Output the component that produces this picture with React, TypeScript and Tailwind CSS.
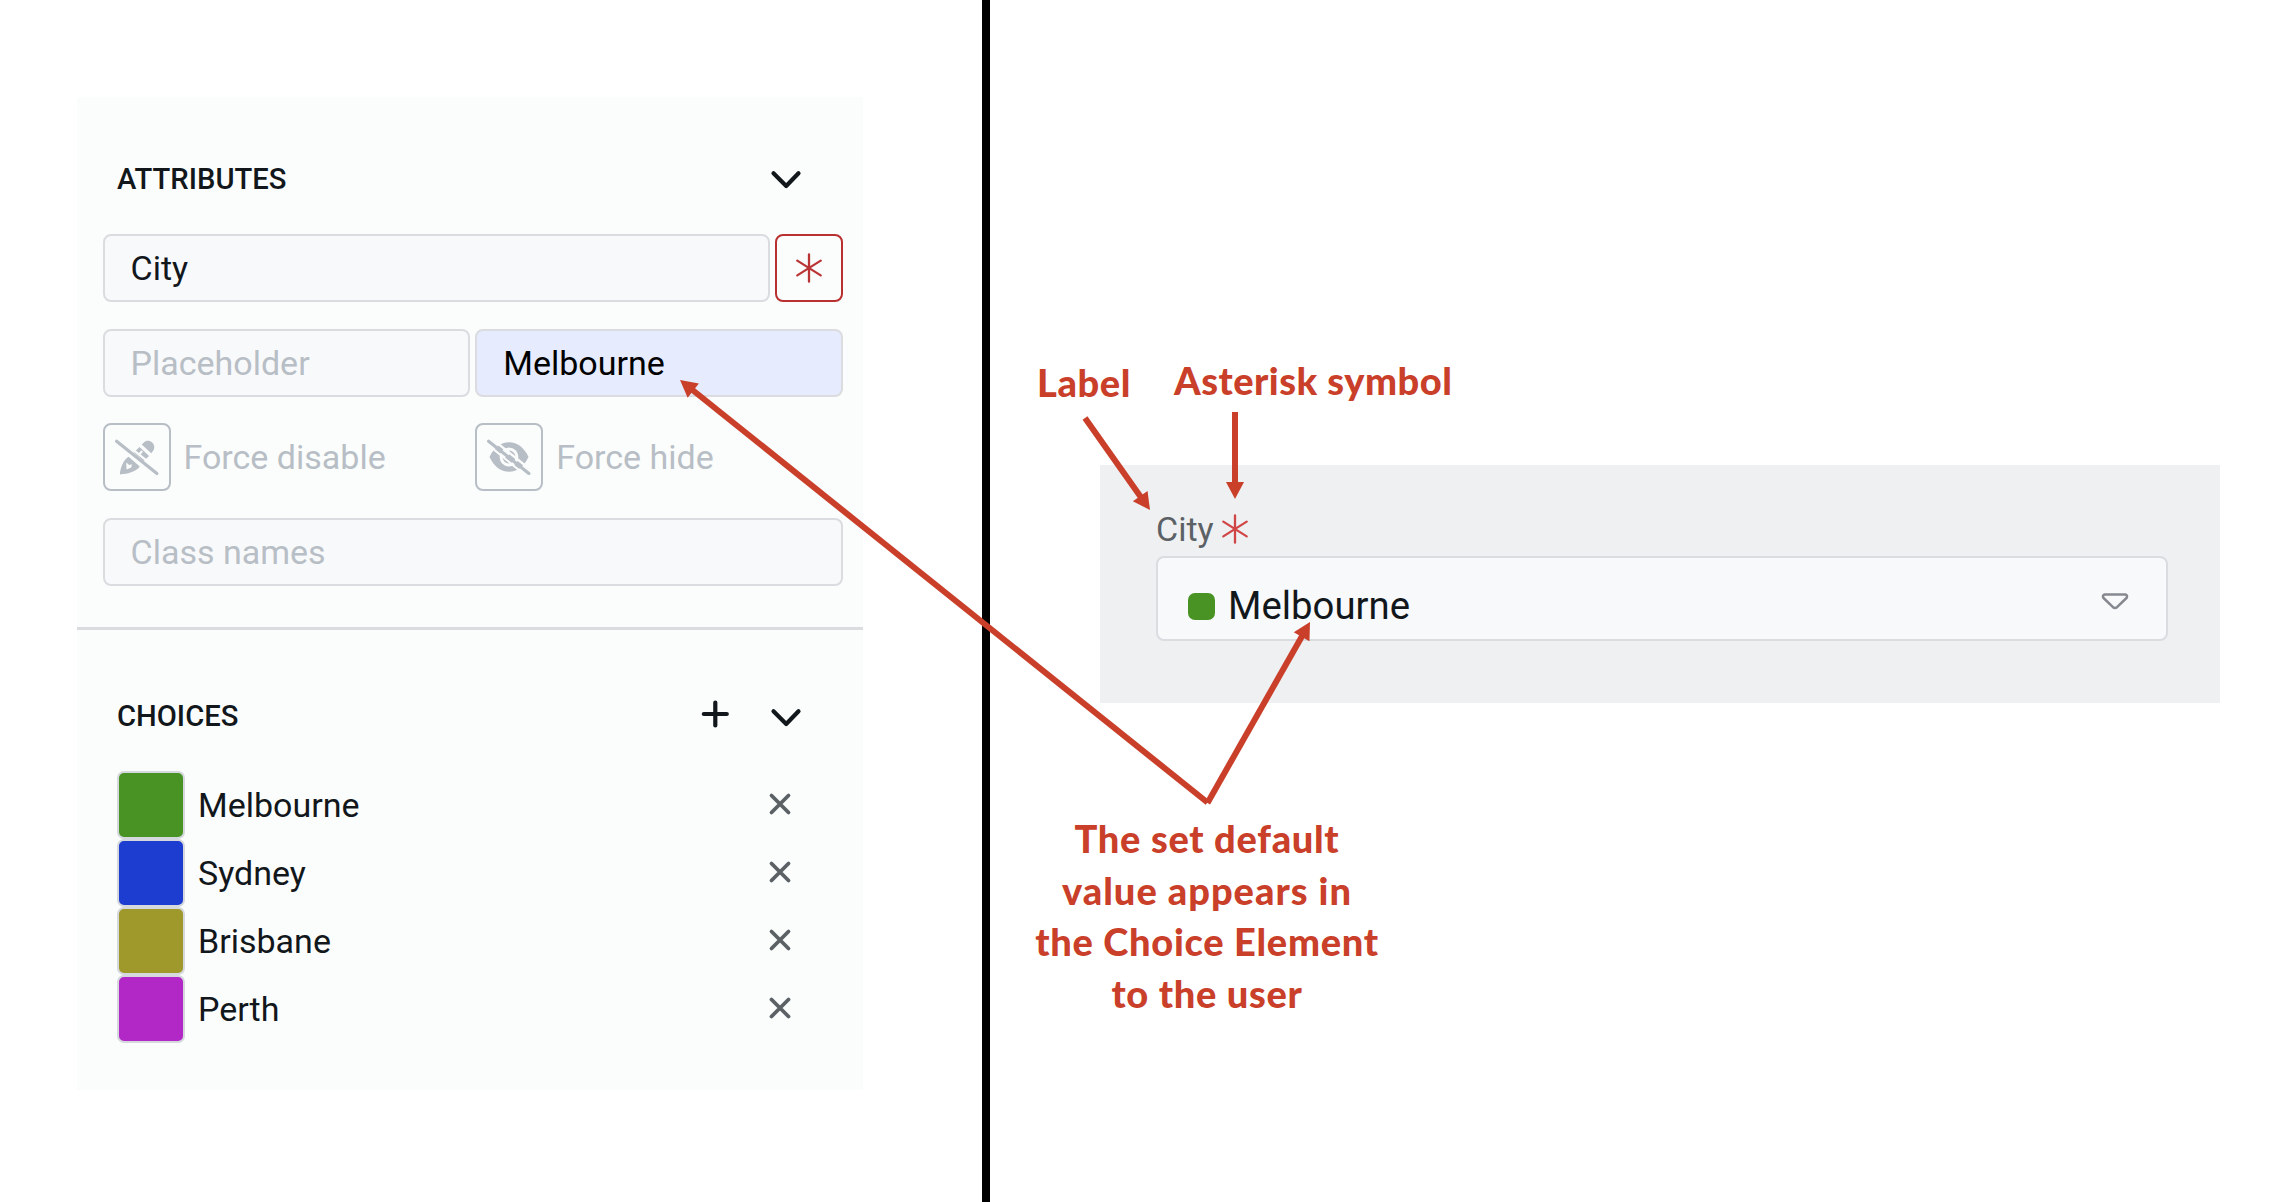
import React from "react";

const RED = "#c93f2a";

function Chevron() {
  return (
    <svg className="h-[20px] w-[32px]" viewBox="0 0 32 20" fill="none" stroke="#12171b" strokeWidth="4.2" strokeLinecap="round" strokeLinejoin="round">
      <path d="M3.5 3.3 16.2 16 28.5 3.3" />
    </svg>
  );
}

function Asterisk({ color }: { color: string }) {
  return (
    <svg className="h-[30px] w-[28px] shrink-0" viewBox="0 0 28 30" fill="none" stroke={color} strokeWidth="2.3" strokeLinecap="round">
      <path d="M14 1.3V28.7M2.3 7.6 25.7 22.4M25.7 7.6 2.3 22.4" />
    </svg>
  );
}

function PenOff() {
  return (
    <svg className="h-[40px] w-[46px]" viewBox="0 0 46 40">
      <g fill="#b8bec5">
        <path d="M30.2 5.2c2.2-2.2 5.6-2 8 .4s2.8 6 .8 8.400l-1.800 2.200-9.500-8.700z" />
        <path d="M25.500 10l9.600 8.900-5.400 5.200-9.900-8.600z" />
        <path d="M14.600 19.800 25.800 29.500C21.600 35.200 13.500 36.800 5.900 37.400 6.100 31 9.600 22.500 14.600 19.800Z" />
      </g>
      <path d="M12.300 25.500 15.300 28 18 27.300 17.200 30.500 12.500 32.500z" fill="#fbfdfc" />
      <path d="M25.200 17.500 28.200 14" stroke="#fbfdfc" strokeWidth="2" />
      <path d="M4.600 1.200 44.900 33.400" stroke="#fbfdfc" strokeWidth="2.200" />
      <path d="M2.600 4.200 42.900 36.400" stroke="#b8bec5" strokeWidth="3.200" strokeLinecap="round" />
    </svg>
  );
}

function EyeOff() {
  return (
    <svg className="h-[40px] w-[46px]" viewBox="0 0 46 40">
      <path d="M3.500 20C8 10.500 14.500 5.300 23 5.300S38 10.500 42.500 20C38 29.500 31.500 34.700 23 34.700S8 29.500 3.500 20Z" fill="#b8bec5" />
      <circle cx="23" cy="20" r="9.400" fill="#fbfdfc" />
      <path d="M23.500 13.500a6.500 6.500 0 1 1-7 6.500a5 5 0 0 0 6.700-6.500z" fill="#b8bec5" />
      <path d="M4.600 .8 44.900 33" stroke="#fbfdfc" strokeWidth="2.400" />
      <path d="M.6 6.600 38.900 38" stroke="#fbfdfc" strokeWidth="2" />
      <path d="M2.600 4.200 42.900 36.400" stroke="#b8bec5" strokeWidth="3.200" strokeLinecap="round" />
    </svg>
  );
}

function Field({ children, className }: { children: React.ReactNode; className: string }) {
  return <div className={"flex h-[68px] items-center rounded-[8px] border-2 border-[#dadce0] pt-[1px] pl-[26px] " + className}>{children}</div>;
}

const choices = [
  { name: "Melbourne", swatch: "bg-[#489323]" },
  { name: "Sydney", swatch: "bg-[#1c3dd0]" },
  { name: "Brisbane", swatch: "bg-[#9e992a]" },
  { name: "Perth", swatch: "bg-[#b228c6]" },
];

function Arrow({ x1, y1, x2, y2 }: { x1: number; y1: number; x2: number; y2: number }) {
  const len = Math.hypot(x2 - x1, y2 - y1);
  const ux = (x2 - x1) / len;
  const uy = (y2 - y1) / len;
  const bx = x2 - ux * 17;
  const by = y2 - uy * 17;
  return (
    <g>
      <line x1={x1} y1={y1} x2={bx + ux} y2={by + uy} stroke={RED} strokeWidth="6" />
      <polygon points={`${x2},${y2} ${bx - uy * 9},${by + ux * 9} ${bx + uy * 9},${by - ux * 9}`} fill={RED} />
    </g>
  );
}

const note = "absolute whitespace-nowrap font-['Lato',sans-serif] text-[38px] leading-[51.500px] font-black text-[#c93f2a]";

export default function App() {
  return (
    <div className="relative flex h-[1202px] w-[2274px] overflow-hidden bg-white font-['Roboto',sans-serif] text-[34px] text-[#12171b]">
      <div className="w-[982px] shrink-0 pt-[97px] pl-[77px]">
        <div className="h-[993px] w-[786px] bg-[#fbfdfc]">
          <section className="h-[533px] border-b-3 border-[#dadce0] pr-[20px] pl-[25.500px]">
            <div className="flex h-[137px] items-center justify-between pt-[28px] pr-[41px] pl-[14.500px]">
              <h2 className="text-[29.200px] font-medium">ATTRIBUTES</h2>
              <Chevron />
            </div>
            <div className="flex flex-col gap-[26.600px]">
              <div className="flex gap-[5px]">
                <Field className="flex-1 bg-[#f8f9fb]">City</Field>
                <div className="flex h-[68px] w-[68px] items-center justify-center rounded-[8px] border-2 border-[#b93030]">
                  <Asterisk color="#b93535" />
                </div>
              </div>
              <div className="flex gap-[5px]">
                <Field className="flex-1 bg-[#f8f9fb] text-[#b8bec5]">Placeholder</Field>
                <Field className="flex-1 bg-[#e6ecfd] text-black">Melbourne</Field>
              </div>
              <div className="flex gap-[5px] text-[#b8bec5]">
                <div className="flex flex-1 items-center gap-[13px]">
                  <div className="flex h-[68px] w-[68px] items-center justify-center rounded-[8px] border-2 border-[#b8bec5]"><PenOff /></div>
                  <span>Force disable</span>
                </div>
                <div className="flex flex-1 items-center gap-[13px]">
                  <div className="flex h-[68px] w-[68px] items-center justify-center rounded-[8px] border-2 border-[#b8bec5]"><EyeOff /></div>
                  <span>Force hide</span>
                </div>
              </div>
              <Field className="bg-[#f8f9fb] text-[#b8bec5]">Class names</Field>
            </div>
          </section>
          <section className="pl-[40px]">
            <div className="flex h-[141px] items-center pt-[30px]">
              <h2 className="w-[583px] pt-[2px] text-[29.200px] font-medium">CHOICES</h2>
              <svg className="mr-[39px] -mt-[4px] h-[30px] w-[30px]" viewBox="0 0 30 30" stroke="#12171b" strokeWidth="4.200" strokeLinecap="round">
                <path d="M15.300 3.500V26.500M3.800 15H26.800" />
              </svg>
              <div className="mt-[4px] ml-[1px]"><Chevron /></div>
            </div>
            <ul>
              {choices.map((c) => (
                <li key={c.name} className="flex h-[68px] items-center">
                  <span className={"h-[67.500px] w-[68px] shrink-0 rounded-[7px] border-[2.500px] border-[#d5d8dd] " + c.swatch} />
                  <span className="flex-1 pl-[13px]">{c.name}</span>
                  <svg className="mr-[71px] -mt-[2px] h-[24px] w-[24px]" viewBox="0 0 24 24" stroke="#5c6166" strokeWidth="3.800" strokeLinecap="round">
                    <path d="M3.500 3.500 20.500 20.500M20.500 3.500 3.500 20.500" />
                  </svg>
                </li>
              ))}
            </ul>
          </section>
        </div>
      </div>
      <div className="w-[8px] shrink-0 bg-black" />
      <div className="flex-1 pt-[465px] pl-[110px]">
        <div className="h-[238px] w-[1120px] bg-[#eff0f2] px-[56px] pt-[40px]">
          <div className="flex h-[51px] items-center gap-[7px] pb-[3px] text-[#5c6166]">
            <span>City</span>
            <Asterisk color="#d04545" />
          </div>
          <div className="flex h-[85px] w-[1012px] items-center rounded-[8px] border-2 border-[#dadce0] bg-[#f8f9fb] pr-[37px] pl-[30px] text-[38.300px]">
            <span className="mt-[16px] h-[27px] w-[27px] rounded-[7px] bg-[#489323]" />
            <span className="mt-[14px] flex-1 pl-[13px]">Melbourne</span>
            <svg className="mt-[6px] h-[20px] w-[28px]" viewBox="0 0 28 20" fill="none" stroke="#85898f" strokeWidth="2.500" strokeLinejoin="round">
              <path d="M3.500 2.500H24.500Q27 3.500 25.500 6L16 15.200Q14 16.800 12 15.200L2.500 6Q1 3.500 3.500 2.500Z" />
            </svg>
          </div>
        </div>
      </div>

      <svg className="absolute inset-0 h-full w-full" viewBox="0 0 2274 1202">
        <Arrow x1={1085} y1={418} x2={1150} y2={510} />
        <Arrow x1={1235} y1={412} x2={1235} y2={499} />
        <Arrow x1={1207.500} y1={802.500} x2={680} y2={380} />
        <Arrow x1={1207.500} y1={803} x2={1310} y2={622} />
      </svg>
      <div className={note + " top-[357px] left-[1037px] tracking-[0.600px]"}>Label</div>
      <div className={note + " top-[355px] left-[1174px] tracking-[0.500px]"}>Asterisk symbol</div>
      <div className={note + " top-[813px] left-[1007px] w-[400px] text-center tracking-[0.700px]"}>
        The set default<br /><span className="tracking-[1px]">value appears in</span><br />the Choice Element<br />to the user
      </div>
    </div>
  );
}
